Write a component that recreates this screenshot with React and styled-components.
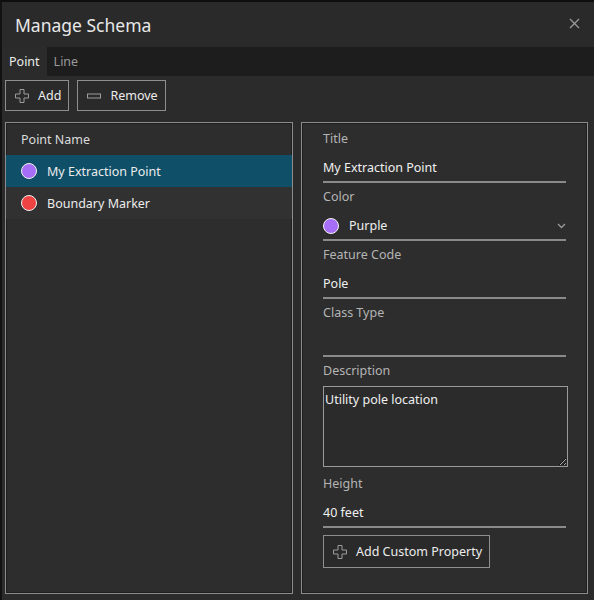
import React from 'react'
import styled, { createGlobalStyle } from 'styled-components'

const GlobalStyle = createGlobalStyle`
  body {
    margin: 0;
    background: #2b2b2b;
    font-family: "Noto Sans", "Open Sans", sans-serif;
    color: #e6e6e6;
  }
`

const points = [
  { id: 1, name: 'My Extraction Point', color: '#a66ef7', selected: true },
  { id: 2, name: 'Boundary Marker', color: '#ef4343' },
]

const PlusIcon = () => (
  <svg width="16" height="16" viewBox="0 0 16 16">
    <path d="M6 1.5h4v4.5h4.5v4h-4.5v4.5h-4v-4.5h-4.5v-4h4.5z" fill="none" stroke="#9c9c9c" strokeWidth="1" />
  </svg>
)

const MinusIcon = () => (
  <svg width="16" height="16" viewBox="0 0 16 16">
    <rect x="1.5" y="6" width="13" height="4" fill="none" stroke="#9c9c9c" strokeWidth="1" />
  </svg>
)

const App = () => {
  return (
    <>
      <GlobalStyle />
      <Dialog>
        <TitleBar>
          <Title>Manage Schema</Title>
          <Close>
            <svg width="11" height="11" viewBox="0 0 11 11">
              <path d="M1 1L10 10M10 1L1 10" stroke="#9a9a9a" strokeWidth="1.3" />
            </svg>
          </Close>
        </TitleBar>
        <Tabs>
          <Tab active>Point</Tab>
          <Tab>Line</Tab>
        </Tabs>
        <Toolbar>
          <ToolButton><PlusIcon />Add</ToolButton>
          <ToolButton><MinusIcon />Remove</ToolButton>
        </Toolbar>
        <Content>
          <Panel>
            <ListHeader>Point Name</ListHeader>
            {points.map((p) => (
              <Row key={p.id} selected={p.selected}>
                <Dot color={p.color} />
                {p.name}
              </Row>
            ))}
          </Panel>
          <Panel form>
            <Label>Title</Label>
            <Input>My Extraction Point</Input>
            <Label>Color</Label>
            <Input>
              <Dot color="#a66ef7" />
              <Grow>Purple</Grow>
              <svg width="9" height="6" viewBox="0 0 9 6">
                <path d="M1 1l3.5 3.5L8 1" fill="none" stroke="#9a9a9a" strokeWidth="1.3" />
              </svg>
            </Input>
            <Label>Feature Code</Label>
            <Input>Pole</Input>
            <Label>Class Type</Label>
            <Input />
            <Label>Description</Label>
            <TextArea defaultValue="Utility pole location" />
            <Label>Height</Label>
            <Input>40 feet</Input>
            <ToolButton wide><PlusIcon />Add Custom Property</ToolButton>
          </Panel>
        </Content>
      </Dialog>
    </>
  )
}

const Dialog = styled.div`
  width: 594px;
  height: 600px;
  box-sizing: border-box;
  border-top: 2px solid #0e0e0e;
  border-left: 2px solid #121212;
  background: #2b2b2b;
  display: flex;
  flex-direction: column;
`
const TitleBar = styled.div`
  height: 45px;
  display: flex;
  align-items: center;
  justify-content: space-between;
  padding: 0 14px 0 13px;
  background: #2a2a2a;
`
const Title = styled.div`
  font-size: 17.5px;
  color: #e8e8e8;
`
const Close = styled.div`
  display: flex;
  margin-top: -2px;
`
const Tabs = styled.div`
  height: 29px;
  display: flex;
  background: #1d1d1d;
`
const Tab = styled.div`
  display: flex;
  align-items: center;
  padding: 0 7px;
  font-size: 12.5px;
  background: ${(p) => (p.active ? '#2b2b2b' : 'transparent')};
  color: ${(p) => (p.active ? '#ececec' : '#9a9a9a')};
`
const Toolbar = styled.div`
  display: flex;
  gap: 8px;
  padding: 4px 3px 0;
  height: 42px;
  box-sizing: border-box;
`
const ToolButton = styled.div`
  height: 31px;
  box-sizing: border-box;
  display: flex;
  align-items: center;
  gap: 8px;
  padding: 0 7px 0 8px;
  border: 1px solid #8e8e8e;
  background: #2a2a2a;
  font-size: 12.5px;
  color: #ececec;
  align-self: flex-start;
  ${(p) => p.wide && `height: 33px; margin-top: 3px;`}
`
const Content = styled.div`
  flex: 1;
  display: grid;
  grid-template-columns: 288px 287px;
  gap: 8px;
  padding: 4px 6px 6px 3px;
  min-height: 0;
`
const Panel = styled.div`
  border: 1px solid #8c8c8c;
  box-shadow: inset 0 0 0 1px #1f1f1f;
  background: #2d2d2d;
  display: flex;
  flex-direction: column;
  padding: ${(p) => (p.form ? '6px 20px 0 21px' : '0')};
`
const ListHeader = styled.div`
  height: 32px;
  display: flex;
  align-items: center;
  padding-left: 15px;
  font-size: 12.5px;
  color: #dcdcdc;
`
const Row = styled.div`
  height: 32px;
  display: flex;
  align-items: center;
  gap: 10px;
  padding-left: 15px;
  font-size: 12.5px;
  color: #ececec;
  background: ${(p) => (p.selected ? '#0f4f67' : '#313131')};
`
const Dot = styled.span`
  width: 14px;
  height: 14px;
  border-radius: 50%;
  border: 1.5px solid #f2f2f2;
  background: ${(p) => p.color};
  flex-shrink: 0;
`
const Grow = styled.span`
  flex: 1;
`
const Label = styled.div`
  height: 20px;
  line-height: 20px;
  font-size: 12.5px;
  color: #b4b4b4;
  margin-bottom: 5px;
`
const Input = styled.div`
  width: 243px;
  height: 27px;
  display: flex;
  align-items: center;
  gap: 10px;
  font-size: 12.5px;
  color: #f0f0f0;
  border-bottom: 2px solid #8a8a8a;
  margin-bottom: 4px;
  box-sizing: content-box;
`
const TextArea = styled.textarea`
  width: 245px;
  height: 81px;
  box-sizing: border-box;
  margin: 0 0 7px;
  padding: 4px 1px;
  background: #2b2b2b;
  border: 1px solid #9a9a9a;
  color: #f0f0f0;
  font-family: inherit;
  font-size: 12.5px;
  resize: vertical;
  outline: none;
`

export default App
